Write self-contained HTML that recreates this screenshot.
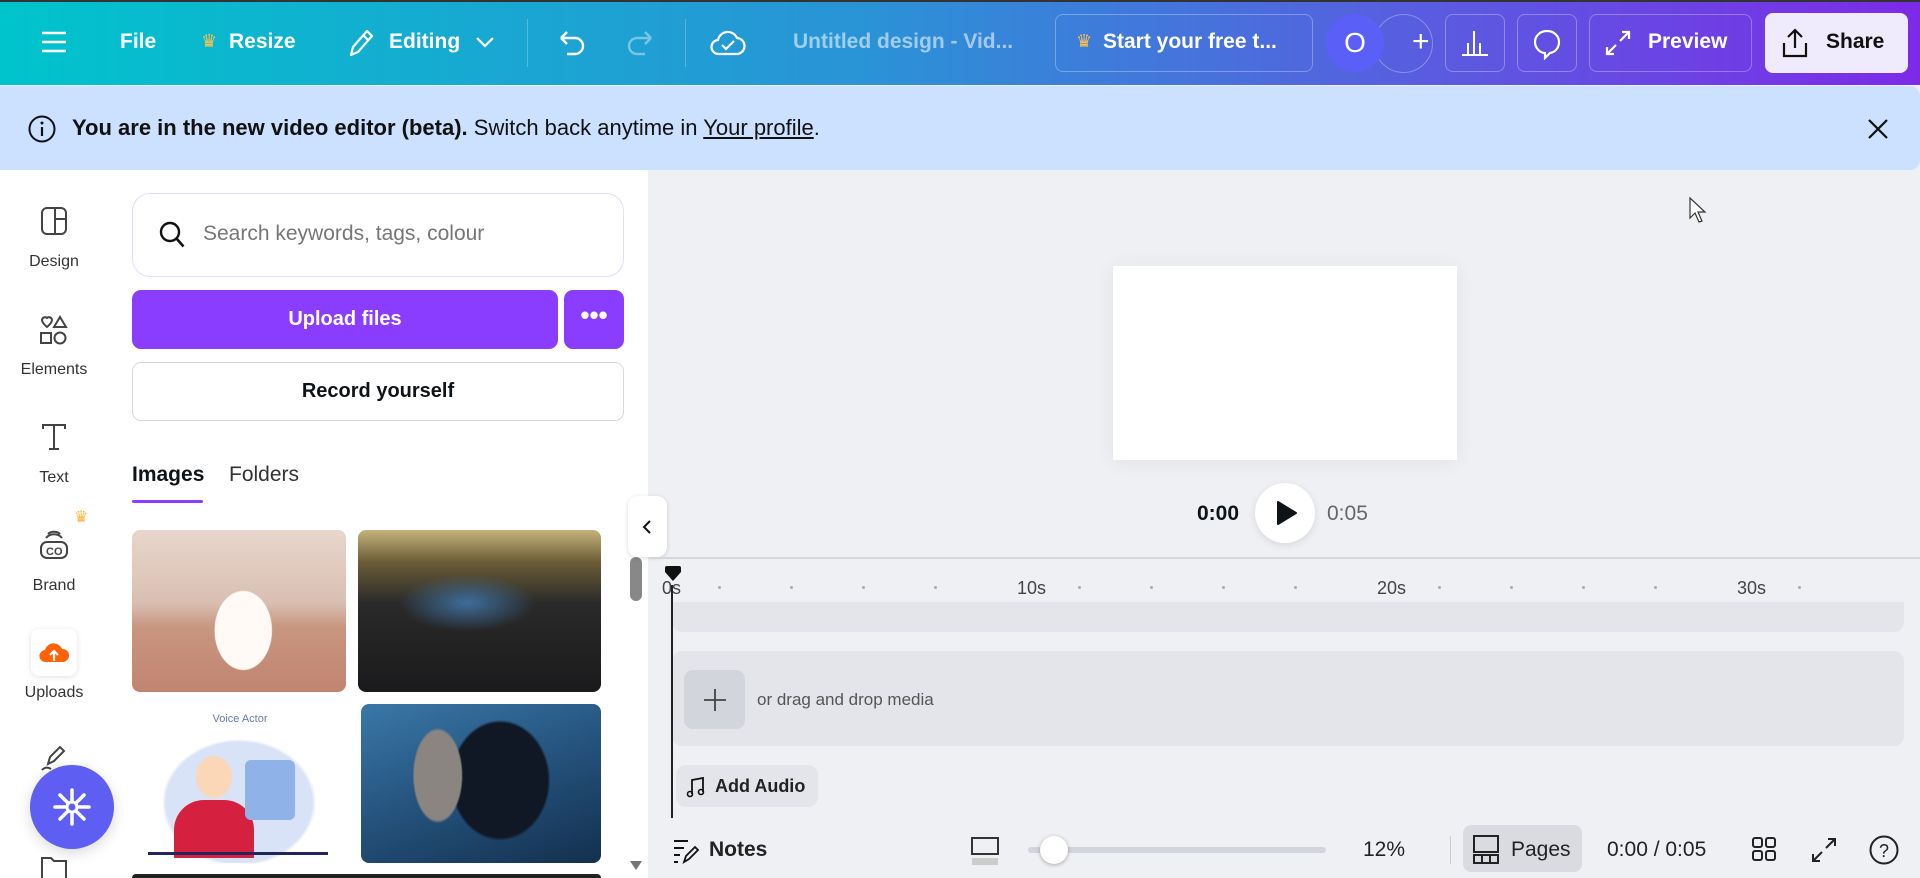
<!DOCTYPE html>
<html><head><meta charset="utf-8"><style>
*{box-sizing:border-box;margin:0;padding:0}
body{width:1920px;height:878px;overflow:hidden;background:#eff0f4;font-family:"Liberation Sans",sans-serif;position:relative;color:#0e1318}
.a{position:absolute}
.hdr{left:0;top:0;width:1920px;height:85px;background:linear-gradient(90deg,#00c4cc 0%,#2a93d6 45%,#5a5be0 75%,#7d2ae8 100%);border-top:2px solid #333}
.ht{color:#fff;font-weight:bold;font-size:21px;top:30px}
.hb{border:1px solid rgba(255,255,255,.3);border-radius:8px;height:58px;top:14px}
.ban{left:0;top:86px;width:1920px;height:84px;background:#cce0ff;border-radius:0 10px 10px 0}
.side{font-size:16px;color:#333;width:108px;text-align:center;left:0}
.panel{left:0;top:170px;width:648px;height:708px;background:#fff}
.ic{stroke:#444;fill:none;stroke-width:2}
.tick{width:3px;height:3px;background:#aaa;border-radius:2px;top:586px}
.lbl{font-size:18px;color:#444;top:578px}
</style></head><body>
<div class="a hdr"></div>
<svg class="a" style="left:40px;top:30px" width="28" height="24"><path d="M2 3h24M2 12h24M2 21h24" stroke="#fff" stroke-width="2.4"/></svg>
<div class="a ht" style="left:120px">File</div>
<div class="a" style="left:201px;top:31px;color:#ffc24a;font-size:18px">♛</div>
<div class="a ht" style="left:229px">Resize</div>
<svg class="a" style="left:345px;top:27px" width="30" height="32"><path d="M6 28l2-8L22 4l5 5-14 16z M18 8l5 5" stroke="#fff" stroke-width="2.2" fill="none" stroke-linejoin="round"/></svg>
<div class="a ht" style="left:389px">Editing</div>
<svg class="a" style="left:475px;top:36px" width="20" height="12"><path d="M2 2l8 8 8-8" stroke="#fff" stroke-width="2.2" fill="none"/></svg>
<div class="a" style="left:527px;top:19px;width:1px;height:48px;background:rgba(255,255,255,.25)"></div>
<svg class="a" style="left:555px;top:28px" width="32" height="30"><path d="M6 10h14a8 8 0 010 16H12 M6 10l6-6 M6 10l6 6" stroke="#fff" stroke-width="2.4" fill="none"/></svg>
<svg class="a" style="left:625px;top:28px" width="32" height="30"><path d="M26 10H12a8 8 0 000 16h8 M26 10l-6-6 M26 10l-6 6" stroke="rgba(255,255,255,.4)" stroke-width="2.4" fill="none"/></svg>
<div class="a" style="left:685px;top:19px;width:1px;height:48px;background:rgba(255,255,255,.25)"></div>
<svg class="a" style="left:710px;top:26px" width="36" height="32"><path d="M9 28a7 7 0 01-1-14 10 10 0 0119-2 7 7 0 01-1 16z M12 19l4 4 8-8" stroke="#fff" stroke-width="2.2" fill="none"/></svg>
<div class="a ht" style="left:793px;color:rgba(255,255,255,.55)">Untitled design - Vid...</div>
<div class="a hb" style="left:1055px;width:258px"></div>
<div class="a" style="left:1076px;top:31px;color:#ffc24a;font-size:18px">♛</div>
<div class="a ht" style="left:1103px">Start your free t...</div>
<div class="a" style="left:1374px;top:14px;width:59px;height:59px;border-radius:50%;border:1px solid rgba(255,255,255,.3)"></div>
<div class="a" style="left:1412px;top:25px;color:#fff;font-size:30px;font-weight:300">+</div>
<div class="a" style="left:1326px;top:14px;width:58px;height:58px;border-radius:50%;background:#5a5ff8;color:#fff;font-size:28px;text-align:center;line-height:58px">O</div>
<div class="a hb" style="left:1445px;width:60px"></div>
<svg class="a" style="left:1460px;top:28px" width="30" height="30"><path d="M2 27h26 M8 27V15 M14 27V3 M20 27V15" stroke="#fff" stroke-width="2" fill="none"/></svg>
<div class="a hb" style="left:1517px;width:60px"></div>
<svg class="a" style="left:1531px;top:28px" width="32" height="32"><path d="M16 3C9 3 4 8 4 14s5 11 10 11l0 5 5-5c6-1 9-6 9-11 0-6-5-11-12-11z" stroke="#fff" stroke-width="2.2" fill="none"/></svg>
<div class="a hb" style="left:1589px;width:163px"></div>
<svg class="a" style="left:1604px;top:29px" width="28" height="28"><path d="M16 12l9-9 M18 3h7v7 M12 16l-9 9 M3 18v7h7" stroke="#fff" stroke-width="2.2" fill="none"/></svg>
<div class="a ht" style="left:1648px">Preview</div>
<div class="a" style="left:1765px;top:13px;width:143px;height:60px;border-radius:8px;background:#f0ebfc"></div>
<svg class="a" style="left:1780px;top:27px" width="30" height="32"><path d="M15 3v18 M8 10l7-7 7 7 M4 16v13h22V16" stroke="#111" stroke-width="2.2" fill="none"/></svg>
<div class="a ht" style="left:1826px;color:#111">Share</div>
<div class="a ban"></div>
<svg class="a" style="left:27px;top:114px" width="30" height="30"><circle cx="15" cy="15" r="12.5" stroke="#111" stroke-width="2" fill="none"/><path d="M15 13v9" stroke="#111" stroke-width="2.2"/><circle cx="15" cy="9" r="1.5" fill="#111"/></svg>
<div class="a" style="left:72px;top:115px;font-size:22px;color:#111"><b>You are in the new video editor (beta).</b> Switch back anytime in <u>Your profile</u>.</div>
<svg class="a" style="left:1866px;top:117px" width="24" height="24"><path d="M3 3l18 18M21 3L3 21" stroke="#111" stroke-width="2.2"/></svg>
<div class="a panel"></div>
<svg class="a" style="left:40px;top:206px" width="28" height="30"><rect x="2" y="2" width="24" height="26" rx="5" class="ic"/><path d="M15 2v26 M15 13h11" class="ic"/></svg>
<div class="a side" style="top:253px">Design</div>
<svg class="a" style="left:38px;top:314px" width="32" height="32"><path d="M4 6a3 3 0 015-2 3 3 0 015 2c0 3-5 7-5 7s-5-4-5-7z M22 3l6 10H16z" class="ic"/><rect x="3" y="19" width="10" height="10" class="ic"/><circle cx="22" cy="24" r="5.5" class="ic"/></svg>
<div class="a side" style="top:361px">Elements</div>
<svg class="a" style="left:40px;top:422px" width="28" height="30"><path d="M3 7V3h22v4 M14 3v24 M9 27h10" class="ic"/></svg>
<div class="a side" style="top:469px">Text</div>
<div class="a" style="left:74px;top:507px;color:#ffb43a;font-size:16px">♛</div>
<svg class="a" style="left:38px;top:530px" width="32" height="32"><path d="M8 8c4-5 12-5 16 0 M10 4c3-3 9-3 12 0" class="ic"/><rect x="3" y="12" width="26" height="16" rx="6" class="ic"/><text x="8" y="25" font-size="11" font-family="Liberation Sans" font-weight="bold" fill="#444">CO</text></svg>
<div class="a side" style="top:577px">Brand</div>
<div class="a" style="left:31px;top:629px;width:46px;height:47px;background:#fff;border-radius:8px;box-shadow:0 1px 6px rgba(0,0,0,.12)"></div>
<svg class="a" style="left:38px;top:638px" width="32" height="28"><path d="M8 24a6 6 0 01-1-12 9 9 0 0117-1 6 6 0 011 13z" fill="#ff6105"/><path d="M16 23v-9 M12 17l4-4 4 4" stroke="#fff" stroke-width="2.2" fill="none"/></svg>
<div class="a side" style="top:684px">Uploads</div>
<svg class="a" style="left:38px;top:742px" width="32" height="30"><path d="M10 22l2-7 10-10 4 4-10 10z M4 28c3-3 6-3 9-1" class="ic"/></svg>
<svg class="a" style="left:40px;top:854px" width="28" height="24"><path d="M2 24V4h9l3 3h12v17" class="ic"/></svg>
<div class="a" style="left:30px;top:765px;width:84px;height:84px;border-radius:50%;background:#5e5ef2;box-shadow:0 4px 14px rgba(0,0,0,.15)"></div>
<svg class="a" style="left:52px;top:787px" width="40" height="40"><g stroke="#fff" stroke-width="3.5" stroke-linecap="round"><path d="M20 3v10M20 27v10M3 20h10M27 20h10M8 8l7 7M25 25l7 7M32 8l-7 7M15 25l-7 7"/></g><circle cx="20" cy="20" r="5" fill="#5e5ef2" stroke="#fff" stroke-width="3"/></svg>
<div class="a" style="left:132px;top:193px;width:492px;height:84px;border:1px solid #e2ddfa;border-radius:18px"></div>
<svg class="a" style="left:158px;top:220px" width="30" height="32"><circle cx="12" cy="12" r="9" stroke="#111" stroke-width="2.4" fill="none"/><path d="M18.5 18.5l7 8" stroke="#111" stroke-width="2.6"/></svg>
<div class="a" style="left:203px;top:222px;font-size:21px;color:#767676">Search keywords, tags, colour</div>
<div class="a" style="left:132px;top:290px;width:426px;height:59px;border-radius:9px;background:#8b3dff;color:#fff;font-weight:bold;font-size:20px;text-align:center;line-height:59px">Upload files</div>
<div class="a" style="left:564px;top:290px;width:60px;height:59px;border-radius:9px;background:#8b3dff;color:#fff;font-size:26px;font-weight:bold;text-align:center;line-height:50px">•••</div>
<div class="a" style="left:132px;top:362px;width:492px;height:59px;border:1px solid #d8d8dc;border-radius:9px;font-weight:bold;font-size:20px;text-align:center;line-height:57px">Record yourself</div>
<div class="a" style="left:132px;top:463px;font-size:21px;font-weight:bold">Images</div>
<div class="a" style="left:229px;top:463px;font-size:21px;color:#333">Folders</div>
<div class="a" style="left:132px;top:500px;width:71px;height:3px;background:#8b3dff;border-radius:2px"></div>
<div class="a" style="left:132px;top:530px;width:214px;height:162px;border-radius:8px;background:radial-gradient(ellipse 22% 40% at 52% 62%,#fffaf6 0 60%,transparent 62%),linear-gradient(180deg,#e8d6cc 0%,#d9bfb2 45%,#c9967f 60%,#c08571 100%)"></div>
<div class="a" style="left:358px;top:530px;width:243px;height:162px;border-radius:8px;background:radial-gradient(ellipse 40% 25% at 45% 45%,#3e6d9a 0,transparent 70%),linear-gradient(180deg,#c5b27a 0%,#6b5c36 20%,#2a2a2a 45%,#1a1a1c 100%)"></div>
<div class="a" style="left:132px;top:704px;width:214px;height:159px;border-radius:8px;background:radial-gradient(ellipse 36% 40% at 50% 62%,#d9e3f7 0 95%,transparent 100%),#fff"></div>
<div class="a" style="left:150px;top:713px;width:180px;text-align:center;font-size:11px;color:#6a7ba6">Voice Actor</div>
<div class="a" style="left:174px;top:800px;width:80px;height:58px;background:#d5213f;border-radius:30px 30px 0 0"></div>
<div class="a" style="left:196px;top:756px;width:36px;height:42px;background:#fbd6b7;border-radius:50%"></div>
<div class="a" style="left:245px;top:760px;width:50px;height:60px;background:#8fb2e8;border-radius:6px"></div>
<div class="a" style="left:148px;top:852px;width:180px;height:3px;background:#24245c"></div>
<div class="a" style="left:361px;top:704px;width:240px;height:159px;border-radius:8px;background:radial-gradient(ellipse 14% 40% at 32% 45%,#8a8580 0 70%,transparent 75%),radial-gradient(ellipse 22% 40% at 58% 48%,#101826 0 90%,transparent 95%),linear-gradient(160deg,#3a78a8 0%,#24527c 50%,#14304e 100%)"></div>
<div class="a" style="left:132px;top:874px;width:469px;height:4px;background:#222;border-radius:4px 4px 0 0"></div>
<div class="a" style="left:630px;top:557px;width:12px;height:44px;background:#888;border-radius:6px"></div>
<div class="a" style="left:630px;top:861px;width:0;height:0;border-left:6px solid transparent;border-right:6px solid transparent;border-top:9px solid #777"></div>
<div class="a" style="left:628px;top:496px;width:39px;height:61px;background:#fff;border-radius:10px;box-shadow:0 1px 5px rgba(0,0,0,.15)"></div>
<svg class="a" style="left:641px;top:519px" width="12" height="16"><path d="M9 2L3 8l6 6" stroke="#111" stroke-width="2" fill="none"/></svg>
<div class="a" style="left:1113px;top:266px;width:344px;height:194px;background:#fff;box-shadow:0 2px 20px rgba(0,0,0,.06)"></div>
<div class="a" style="left:1197px;top:502px;font-size:21px;font-weight:bold">0:00</div>
<div class="a" style="left:1255px;top:483px;width:60px;height:60px;border-radius:50%;background:#fff;box-shadow:0 2px 8px rgba(0,0,0,.1)"></div>
<svg class="a" style="left:1275px;top:499px" width="24" height="28"><path d="M3 3l18 11L3 25z" fill="#0e1318" stroke="#0e1318" stroke-width="2" stroke-linejoin="round"/></svg>
<div class="a" style="left:1327px;top:502px;font-size:21px;color:#666">0:05</div>
<div class="a" style="left:649px;top:557px;width:1271px;height:2px;background:#d4d6dc"></div>
<svg class="a" style="left:1688px;top:196px" width="20" height="28"><path d="M2 2v20l5-5 4 9 3-1-4-9h7z" fill="#fff" stroke="#333" stroke-width="1.2"/></svg>
<div class="a lbl" style="left:662px">0s</div>
<div class="a lbl" style="left:1017px">10s</div>
<div class="a lbl" style="left:1377px">20s</div>
<div class="a lbl" style="left:1737px">30s</div>
<div class="a tick" style="left:718px"></div><div class="a tick" style="left:790px"></div><div class="a tick" style="left:862px"></div><div class="a tick" style="left:934px"></div>
<div class="a tick" style="left:1078px"></div><div class="a tick" style="left:1150px"></div><div class="a tick" style="left:1222px"></div><div class="a tick" style="left:1294px"></div>
<div class="a tick" style="left:1438px"></div><div class="a tick" style="left:1510px"></div><div class="a tick" style="left:1582px"></div><div class="a tick" style="left:1654px"></div>
<div class="a tick" style="left:1798px"></div>
<div class="a" style="left:672px;top:602px;width:1232px;height:30px;background:#e4e5ea;border-radius:0 0 10px 10px"></div>
<div class="a" style="left:672px;top:651px;width:1232px;height:95px;background:#e4e5ea;border-radius:10px"></div>
<div class="a" style="left:684px;top:670px;width:61px;height:59px;background:#d3d5dc;border-radius:9px"></div>
<svg class="a" style="left:702px;top:687px" width="26" height="26"><path d="M13 2v22M2 13h22" stroke="#444" stroke-width="1.8"/></svg>
<div class="a" style="left:757px;top:690px;font-size:17px;color:#555">or drag and drop media</div>
<div class="a" style="left:676px;top:765px;width:142px;height:42px;background:#e4e5ea;border-radius:10px"></div>
<svg class="a" style="left:686px;top:776px" width="20" height="22"><path d="M6 18V4l11-2v14" stroke="#111" stroke-width="1.8" fill="none"/><circle cx="4" cy="18" r="2.5" stroke="#111" stroke-width="1.6" fill="none"/><circle cx="15" cy="16" r="2.5" stroke="#111" stroke-width="1.6" fill="none"/></svg>
<div class="a" style="left:715px;top:776px;font-size:18px;font-weight:bold;color:#222">Add Audio</div>
<div class="a" style="left:671px;top:585px;width:2px;height:233px;background:#222"></div>
<svg class="a" style="left:663px;top:565px" width="20" height="18"><path d="M2 3a2 2 0 012-2h12a2 2 0 012 2v4l-8 9-8-9z" fill="#111"/></svg>
<svg class="a" style="left:672px;top:838px" width="28" height="26"><path d="M2 3h14 M2 10h10 M2 17h6 M2 24h4" stroke="#111" stroke-width="2"/><path d="M12 24l2-6 9-9 3 3-9 9z" stroke="#111" stroke-width="1.8" fill="none"/></svg>
<div class="a" style="left:709px;top:838px;font-size:21px;font-weight:bold;color:#222">Notes</div>
<svg class="a" style="left:970px;top:836px" width="30" height="30"><rect x="2" y="2" width="26" height="16" stroke="#333" stroke-width="2" fill="none"/><rect x="2" y="22" width="26" height="7" fill="#ccc"/></svg>
<div class="a" style="left:1028px;top:847px;width:298px;height:6px;background:#d3d5dc;border-radius:3px"></div>
<div class="a" style="left:1040px;top:836px;width:28px;height:28px;border-radius:50%;background:#fff;box-shadow:0 1px 4px rgba(0,0,0,.3)"></div>
<div class="a" style="left:1363px;top:838px;font-size:21px;color:#222">12%</div>
<div class="a" style="left:1450px;top:836px;width:1px;height:28px;background:#ccc"></div>
<div class="a" style="left:1463px;top:825px;width:119px;height:47px;background:#d9dbe1;border-radius:8px"></div>
<svg class="a" style="left:1472px;top:834px" width="28" height="30"><rect x="2" y="2" width="24" height="16" stroke="#222" stroke-width="2" fill="none"/><rect x="2" y="21" width="24" height="8" stroke="#222" stroke-width="2" fill="none"/><path d="M10 21v8M18 21v8" stroke="#222" stroke-width="2"/></svg>
<div class="a" style="left:1511px;top:838px;font-size:21px;color:#222">Pages</div>
<div class="a" style="left:1607px;top:838px;font-size:21px;color:#222">0:00 / 0:05</div>
<svg class="a" style="left:1751px;top:836px" width="26" height="26"><g stroke="#222" stroke-width="2" fill="none"><rect x="2" y="2" width="9" height="9" rx="2"/><rect x="15" y="2" width="9" height="9" rx="2"/><rect x="2" y="15" width="9" height="9" rx="2"/><rect x="15" y="15" width="9" height="9" rx="2"/></g></svg>
<svg class="a" style="left:1810px;top:836px" width="28" height="28"><path d="M16 12l9-9 M18 3h7v7 M12 16l-9 9 M3 18v7h7" stroke="#222" stroke-width="2" fill="none"/></svg>
<svg class="a" style="left:1868px;top:834px" width="32" height="32"><circle cx="16" cy="16" r="13.5" stroke="#222" stroke-width="2" fill="none"/><text x="16" y="23" text-anchor="middle" font-size="18" font-family="Liberation Sans" fill="#222">?</text></svg>
</body></html>
